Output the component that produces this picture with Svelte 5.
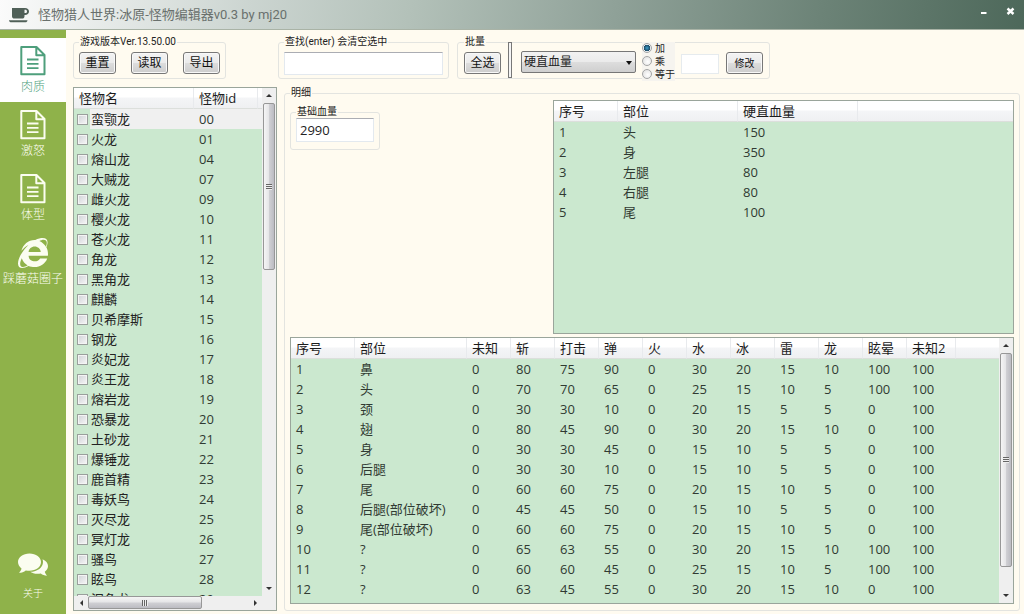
<script>
  const monsters = [
    ['蛮颚龙', '00'], ['火龙', '01'], ['熔山龙', '04'], ['大贼龙', '07'], ['雌火龙', '09'],
    ['樱火龙', '10'], ['苍火龙', '11'], ['角龙', '12'], ['黑角龙', '13'], ['麒麟', '14'],
    ['贝希摩斯', '15'], ['钢龙', '16'], ['炎妃龙', '17'], ['炎王龙', '18'], ['熔岩龙', '19'],
    ['恐暴龙', '20'], ['土砂龙', '21'], ['爆锤龙', '22'], ['鹿首精', '23'], ['毒妖鸟', '24'],
    ['灭尽龙', '25'], ['冥灯龙', '26'], ['骚鸟', '27'], ['眩鸟', '28'], ['泥鱼龙', '29']
  ];
  const stagger = [
    ['1', '头', '150'], ['2', '身', '350'], ['3', '左腿', '80'], ['4', '右腿', '80'], ['5', '尾', '100']
  ];
  const hitHeads = ['序号', '部位', '未知', '斩', '打击', '弹', '火', '水', '冰', '雷', '龙', '眩晕', '未知2'];
  const hits = [
    [1, '鼻', 0, 80, 75, 90, 0, 30, 20, 15, 10, 100, 100],
    [2, '头', 0, 70, 70, 65, 0, 25, 15, 10, 5, 100, 100],
    [3, '颈', 0, 30, 30, 10, 0, 20, 15, 5, 5, 0, 100],
    [4, '翅', 0, 80, 45, 90, 0, 30, 20, 15, 10, 0, 100],
    [5, '身', 0, 30, 30, 45, 0, 15, 10, 5, 5, 0, 100],
    [6, '后腿', 0, 30, 30, 10, 0, 15, 10, 5, 5, 0, 100],
    [7, '尾', 0, 60, 60, 75, 0, 20, 15, 10, 5, 0, 100],
    [8, '后腿(部位破坏)', 0, 45, 45, 50, 0, 15, 10, 5, 5, 0, 100],
    [9, '尾(部位破坏)', 0, 60, 60, 75, 0, 20, 15, 10, 5, 0, 100],
    [10, '?', 0, 65, 63, 55, 0, 30, 20, 15, 10, 100, 100],
    [11, '?', 0, 60, 60, 45, 0, 25, 15, 10, 5, 100, 100],
    [12, '?', 0, 63, 45, 55, 0, 30, 20, 15, 10, 0, 100]
  ];
  const tabs = [
    { label: '肉质', icon: 'doc' },
    { label: '激怒', icon: 'doc' },
    { label: '体型', icon: 'doc' },
    { label: '踩蘑菇圈子', icon: 'ie' }
  ];
  let active = $state(0);
  let mode = $state('加');
  let search = $state('');
  let amount = $state('');
  let baseHp = $state('2990');
</script>

{#snippet scrollbar(dir, size)}
  <div class="scroll {dir}" aria-hidden="true">
    <i class="arrow back"></i>
    <div class="track">
      <div class="thumb" style="--size: {size}%"><i></i></div>
    </div>
    <i class="arrow fwd"></i>
  </div>
{/snippet}

<div class="window">
  <header>
    <svg width="20" height="16" viewBox="0 0 20 16" aria-hidden="true">
      <path fill="#506058" fill-rule="evenodd" d="M3 1h13c2.400 0 4 1.300 4 3.400S18.300 8 16 8h-.5v1.300c0 1.400-1 2.300-2.300 2.300H5.500C4 11.600 3 10.700 3 9.300zM15.500 2.800v3.300h.8c1 0 1.700-.7 1.700-1.700s-.7-1.600-1.700-1.600zM0 13.200h18.500c-.2 1.500-1 2-2.200 2H2.300c-1.300 0-2.100-.6-2.300-2z" />
    </svg>
    <h1>怪物猎人世界:冰原-怪物编辑器v0.3 by mj20</h1>
    <button class="win" aria-label="最小化">
      <svg width="7" height="9" viewBox="0 0 7 9"><path fill="#fff" d="M1 5h5.500v2H1z" /></svg>
    </button>
    <button class="win" aria-label="关闭">
      <svg width="9" height="9" viewBox="0 0 9 9"><path stroke="#fff" stroke-width="2.400" d="M1.500 1.500l6 5.500M7.500 1.500l-6 5.500" /></svg>
    </button>
  </header>

  <div class="body">
    <nav>
      {#each tabs as tab, i}
        <button class="tab" class:active={active === i} onclick={() => (active = i)}>
          {#if tab.icon === 'doc'}
            <svg width="26" height="30" viewBox="0 0 26 30" aria-hidden="true">
              <path fill="none" stroke="currentColor" stroke-width="2" stroke-linejoin="round" d="M1.300 1h15.200l8 8v19.300H1.300zM16.300 1.200v8h8" />
              <path stroke="currentColor" stroke-width="1.800" d="M7 13.500h11.500M7 17.800h11.500M7 22.200h11.500" />
            </svg>
          {:else}
            <svg width="30" height="30" viewBox="0 0 512 512" aria-hidden="true">
              <path fill="currentColor" d="M483.049 159.706c10.855-24.575 21.424-60.438 21.424-87.871 0-72.722-79.641-98.371-209.673-38.577-107.632-7.181-211.221 73.670-237.098 186.457 30.852-34.862 78.271-82.298 121.977-101.158C125.404 166.850 79.128 228.002 43.992 291.725 23.246 329.651 0 390.940 0 436.747c0 98.575 92.854 86.500 180.251 42.006 31.423 15.430 66.559 15.573 101.695 15.573 97.124 0 184.249-54.294 216.814-146.022H377.927c-52.509 88.593-196.819 52.996-196.819-47.436H509.900c6.407-43.581-1.655-95.715-26.851-141.162zM64.559 346.877c17.711 51.150 53.703 95.871 100.266 123.304-88.741 48.940-173.267 29.096-100.266-123.304zm115.977-108.873c2-55.151 50.276-94.871 103.980-94.871 53.418 0 101.981 39.720 103.981 94.871H180.536zm184.536-187.600c21.425-10.287 48.563-22.003 72.558-22.003 31.422 0 54.274 21.717 54.274 53.722 0 20.003-7.427 49.007-14.569 67.867-26.280-42.292-65.986-81.584-112.263-99.586z" />
            </svg>
          {/if}
          <span>{tab.label}</span>
        </button>
      {/each}
      <button class="tab about">
        <svg width="32" height="30" viewBox="0 0 32 30" aria-hidden="true">
          <path fill="currentColor" d="M12.500 1.500c6.500 0 11.500 3.700 11.500 8.600s-5 8.700-11.500 8.700c-1.300 0-2.500-.1-3.700-.4-1.800 1.400-4 2.300-6.800 2.300 1.300-1.200 2.200-2.600 2.500-4.200C2.300 14.900 1 12.700 1 10.100c0-4.900 5-8.600 11.500-8.600z" />
          <path fill="currentColor" d="M25.500 7.200c3.300 1.400 5.500 3.800 5.500 6.800 0 2.300-1.200 4.200-3.200 5.700.3 1.500 1.100 2.800 2.200 4-2.500 0-4.500-.9-6.200-2.200-4.200.9-8.200 0-10.600-1.700 7.400-.2 12.800-4.500 12.800-9.900 0-.9-.2-1.800-.5-2.700z" />
        </svg>
        <span>关于</span>
      </button>
    </nav>

    <main>
      <div class="toolbar">
        <fieldset>
          <legend>游戏版本Ver.13.50.00</legend>
          <div class="row files">
            <button class="btn">重置</button>
            <button class="btn">读取</button>
            <button class="btn">导出</button>
          </div>
        </fieldset>
        <fieldset class="search">
          <legend><label for="search">查找(enter) 会清空选中</label></legend>
          <div class="row">
            <input id="search" type="text" bind:value={search} />
          </div>
        </fieldset>
        <fieldset class="batch">
          <legend>批量</legend>
          <div class="row">
            <button class="btn">全选</button>
            <div class="divider"></div>
            <div class="combo">
              <select aria-label="修改项"><option>硬直血量</option></select>
            </div>
            <div class="modes">
              {#each ['加', '乘', '等于'] as m}
                <label><input type="radio" name="mode" value={m} bind:group={mode} />{m}</label>
              {/each}
            </div>
            <input class="amount" type="text" aria-label="数值" bind:value={amount} />
            <button class="btn small">修改</button>
          </div>
        </fieldset>
      </div>

      <div class="content">
        <section class="grid-box list">
          <div class="pane">
            <div class="clip">
              <table>
                <colgroup><col class="c-name" /><col class="c-id" /><col /></colgroup>
                <thead><tr><th>怪物名</th><th>怪物id</th><th></th></tr></thead>
                <tbody>
                  {#each monsters as [name, id], i}
                    <tr class:hover={i === 0}>
                      <td><label><input type="checkbox" /><span>{name}</span></label></td>
                      <td>{id}</td>
                      <td></td>
                    </tr>
                  {/each}
                </tbody>
              </table>
            </div>
            {@render scrollbar('v', 35)}
          </div>
          {@render scrollbar('h', 71)}
        </section>

        <fieldset class="detail">
          <legend>明细</legend>
          <div class="upper">
            <fieldset class="hp">
              <legend><label for="hp">基础血量</label></legend>
              <input id="hp" type="text" bind:value={baseHp} />
            </fieldset>
            <section class="grid-box stagger">
              <table>
                <colgroup><col class="c-no" /><col class="c-part" /><col class="c-part" /><col /></colgroup>
                <thead><tr><th>序号</th><th>部位</th><th>硬直血量</th><th></th></tr></thead>
                <tbody>
                  {#each stagger as row}
                    <tr>{#each row as cell}<td>{cell}</td>{/each}<td></td></tr>
                  {/each}
                </tbody>
              </table>
            </section>
          </div>
          <section class="grid-box hits">
            <div class="pane">
              <div class="clip">
                <table>
                  <colgroup>
                    <col class="c-no" /><col class="c-hit" />
                    {#each hitHeads.slice(2, -1) as _}<col class="c-num" />{/each}
                    <col class="c-last" /><col />
                  </colgroup>
                  <thead><tr>{#each hitHeads as h}<th>{h}</th>{/each}<th></th></tr></thead>
                  <tbody>
                    {#each hits as row}
                      <tr>{#each row as cell}<td>{cell}</td>{/each}<td></td></tr>
                    {/each}
                  </tbody>
                </table>
              </div>
              {@render scrollbar('v', 91)}
            </div>
          </section>
        </fieldset>
      </div>
    </main>
  </div>
</div>

<style>
  :global(body) { margin: 0; }
  * { box-sizing: border-box; }
  .window {
    display: flex; flex-direction: column; height: 100vh; overflow: hidden;
    background: #fffbf0; color: #222;
    font: 13px/20px "Open Sans", "Noto Sans CJK SC", sans-serif;
  }
  button, input, select { font: inherit; color: inherit; margin: 0; }
  header {
    display: flex; align-items: center; gap: 9px; height: 30px; flex: none;
    padding: 0 9px; border-bottom: 1px solid #a9b3a6;
    background: linear-gradient(100deg, #fbfbfb 0%, #ccd5d1 24%, #b3c1b9 40%, #8fa198 60%, #6c8377 80%, #4d685a 100%);
  }
  h1 { flex: 1; margin: 0; font-size: 13px; font-weight: 400; color: #69706d; font-family: Roboto, "Noto Sans CJK SC", sans-serif; }
  .win { display: grid; place-items: center; width: 18px; height: 18px; margin: 0 0 7px; padding: 0; border: 0; background: none; }
  .win:last-child { margin-right: -4px; }
  .body { flex: 1; min-height: 0; display: flex; }

  nav { display: flex; flex-direction: column; width: 66px; flex: none; padding: 8px 0 6px; background: #8fb24a; }
  .tab {
    display: flex; flex-direction: column; align-items: center; gap: 3px;
    height: 64px; padding: 8px 0 0; border: 0; background: none; color: #fbfdf0;
    font-size: 12px; line-height: 16px; font-weight: 300; white-space: nowrap;
  }
  .tab svg { flex: none; }
  .tab.active { background: #fff; color: #4e9f7c; }
  .about { margin-top: auto; font-size: 10px; }

  main { flex: 1; min-width: 0; display: flex; flex-direction: column; gap: 8px; padding: 6px 4px 3px 7px; }
  fieldset { min-width: 0; margin: 0; padding: 0 5px; border: 1px solid #e3e4e0; border-radius: 3px; }
  legend {
    margin-left: 0; padding: 0 1px; height: 12px;
    font: 10px/12px Roboto, "Noto Sans CJK SC", sans-serif;
  }
  .toolbar { display: flex; height: 43px; flex: none; }
  .row { display: flex; align-items: center; height: 36px; margin-top: -6px; }
  .files { gap: 15px; }
  .btn {
    width: 37px; height: 22px; margin-top: 6px; padding: 0; border: 1px solid #777; border-radius: 3px;
    background: linear-gradient(#f3f3f3, #ebebeb 48%, #dcdcdc 52%, #cdcdcd);
    box-shadow: inset 0 0 0 1px #f8f8f8; font-size: 12px; line-height: 18px; color: #111;
  }
  .btn.small { font-size: 10px; }
  input[type="text"] {
    min-width: 0; border: 1px solid #e3e9ef; border-top-color: #abadb3; background: #fff; padding: 0 4px; outline: 0;
  }
  .search { width: 171px; margin-left: 52px; }
  .search input { flex: 1; height: 23px; margin-top: 6px; }
  .batch { margin-left: 8px; padding: 0 6px; }
  .divider { width: 4px; height: 36px; margin: 0 9px 0 7px; border: 1px solid #777; background: #f4f4f4; }
  .combo { position: relative; width: 115px; margin-top: 3px; }
  .combo::after {
    content: ""; position: absolute; right: 4px; top: 10px; pointer-events: none;
    border: 3px solid transparent; border-top: 4px solid #111; border-bottom: 0;
  }
  select {
    display: block; width: 100%; height: 22px; padding: 0 2px; appearance: none;
    border: 1px solid #777; border-radius: 2px; font-size: 12px; line-height: 18px;
    background: linear-gradient(#f2f2f2, #ebebeb 48%, #dddddd 52%, #cfcfcf);
  }
  .modes { display: flex; flex-direction: column; width: 33px; margin: 2px 0 0 6px; background: #f6f4ef; }
  .modes label { display: flex; align-items: center; gap: 3px; font-size: 10px; line-height: 12px; height: 13px; white-space: nowrap; }
  .modes input {
    appearance: none; width: 10px; height: 10px; flex: none; border: 1px solid #a4a5a5; border-radius: 50%;
    background: radial-gradient(circle at 60% 60%, #fff, #dcdcdc);
  }
  .modes input:checked { background: radial-gradient(circle, #3b9cc9 0, #1c4a66 3px, #e8eef2 3px); }
  input.amount { width: 38px; height: 20px; margin: 8px 7px 0 6px; border-color: #e6ebee; }

  .content { flex: 1; min-height: 0; display: flex; gap: 7px; }
  .grid-box { display: flex; flex-direction: column; overflow: hidden; border: 1px solid #9aa59b; background: #cbe8cf; }
  .list { width: 204px; flex: none; background: #f0f0f0; }
  .pane { flex: 1; min-height: 0; display: flex; }
  .clip { flex: 1; min-width: 0; overflow: hidden; background: #cbe8cf; }
  table { width: 100%; table-layout: fixed; border-collapse: separate; border-spacing: 0; }
  th, td { height: 20px; padding: 0 0 0 5px; text-align: left; font-weight: 400; white-space: nowrap; line-height: 20px; }
  td { color: #303a32; }
  th {
    height: 21px; border-right: 1px solid #e8eaed; border-bottom: 1px solid #dcdfdc; color: #1c1c1c;
    background: linear-gradient(#fff 45%, #f4f5f7 50%, #eff0f2);
  }
  th:last-child { border-right: 0; }
  .list td:first-child { padding-left: 3px; }
  .list td label { display: flex; align-items: center; color: #222; }
  .list td span { flex: 1; padding-left: 1px; }
  .list .hover td, .list .hover span { background: #f0f0f0; }
  .list .hover td:first-child { background: #cbe8cf; }
  input[type="checkbox"] {
    appearance: none; width: 11px; height: 11px; margin: 0 2px 0 0; flex: none; border: 1px solid #9a9f9c;
    background: linear-gradient(135deg, #cfd2d6, #f7f7f7); box-shadow: inset 0 0 0 1px #f4f4f4;
  }
  .c-name { width: 120px; }
  .c-id { width: 64px; }
  .c-no { width: 64px; }
  .c-part { width: 120px; }
  .c-hit { width: 112px; }
  .c-num { width: 44px; }
  .c-last { width: 49px; }

  .scroll { display: flex; flex: none; align-items: center; background: #efefef; }
  .scroll.v { flex-direction: column; width: 14px; }
  .scroll.h { height: 14px; padding-right: 14px; }
  .arrow { display: grid; place-items: center; width: 14px; height: 15px; flex: none; }
  .arrow::before { content: ""; border: 3px solid transparent; }
  .v .back::before { border-top: 0; border-bottom-color: #333; }
  .v .fwd::before { border-bottom: 0; border-top-color: #333; }
  .h .back::before { border-left: 0; border-right-color: #333; }
  .h .fwd::before { border-right: 0; border-left-color: #333; }
  .track { flex: 1; align-self: stretch; min-height: 0; display: flex; justify-content: center; }
  .h .track { justify-content: flex-start; }
  .thumb { display: grid; place-items: center; border: 1px solid #979797; border-radius: 2px; }
  .v .thumb { width: 12px; height: var(--size); background: linear-gradient(90deg, #f5f5f5, #e6e6e8 45%, #cfcfd3 55%, #bcbcc2); }
  .h .thumb { height: 13px; width: var(--size); background: linear-gradient(#f5f5f5, #e6e6e8 45%, #cfcfd3 55%, #bcbcc2); }
  .thumb i { width: 6px; height: 6px; background: repeating-linear-gradient(#666 0 1px, #eee 1px 2px); }
  .h .thumb i { background: repeating-linear-gradient(90deg, #666 0 1px, #eee 1px 2px); }

  .detail { flex: 1; display: flex; flex-direction: column; gap: 3px; padding: 0 5px 6px; }
  .upper { display: flex; align-items: stretch; justify-content: space-between; height: 235px; flex: none; padding-top: 1px; }
  .hp { width: 90px; height: 44px; margin-top: 6px; padding: 0 5px; }
  .hp input { display: block; width: 100%; height: 24px; padding: 0 3px; }
  .stagger { width: calc(100% - 263px); }
  .hits { flex: 1; min-height: 0; }
</style>
